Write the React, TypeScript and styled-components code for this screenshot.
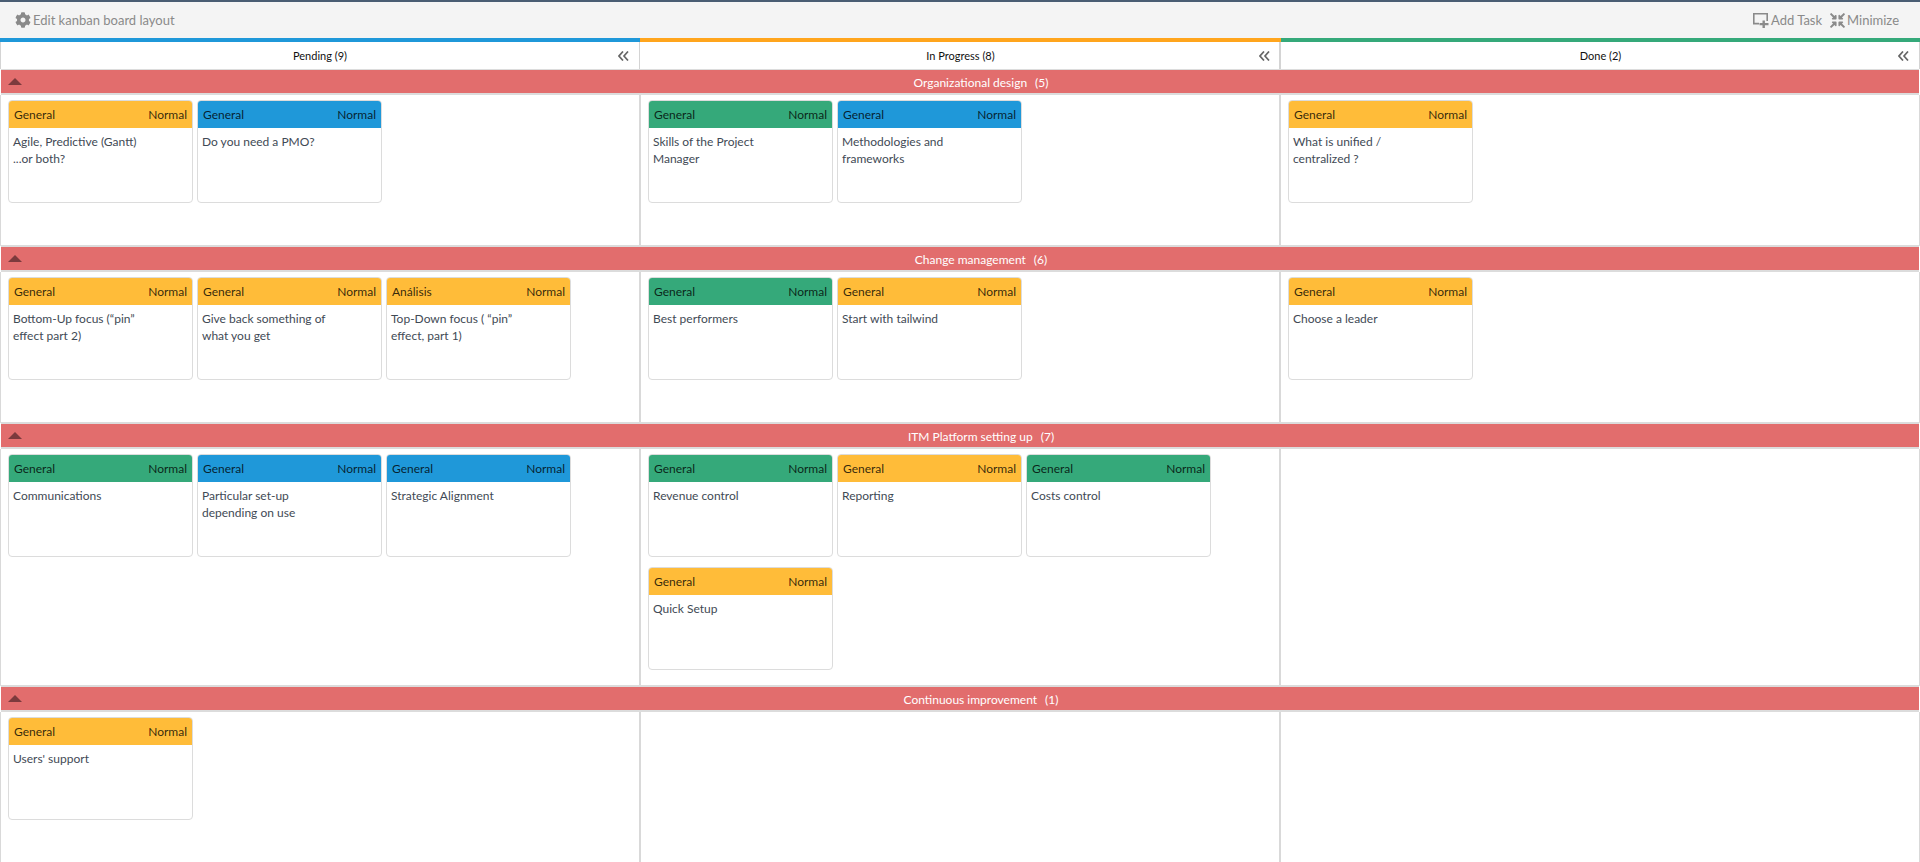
import React from 'react';
import styled, { createGlobalStyle } from 'styled-components';
import { FaCog, FaCompressArrowsAlt } from 'react-icons/fa';

const colors = { yellow: '#ffbc39', blue: '#1f98d9', green: '#35a97a' };
type Tone = keyof typeof colors;

type Task = { tone: Tone; type?: string; title: string[] };
type Lane = { name: string; count: number; minHeight: number; columns: Task[][] };

const lanes: Lane[] = [
  {
    name: 'Organizational design',
    count: 5,
    minHeight: 150,
    columns: [
      [
        { tone: 'yellow', title: ['Agile, Predictive (Gantt)', '...or both?'] },
        { tone: 'blue', title: ['Do you need a PMO?'] },
      ],
      [
        { tone: 'green', title: ['Skills of the Project', 'Manager'] },
        { tone: 'blue', title: ['Methodologies and', 'frameworks'] },
      ],
      [{ tone: 'yellow', title: ['What is unified /', 'centralized ?'] }],
    ],
  },
  {
    name: 'Change management',
    count: 6,
    minHeight: 150,
    columns: [
      [
        { tone: 'yellow', title: ['Bottom-Up focus (“pin”', 'effect part 2)'] },
        { tone: 'yellow', title: ['Give back something of', 'what you get'] },
        { tone: 'yellow', type: 'Análisis', title: ['Top-Down focus ( “pin”', 'effect, part 1)'] },
      ],
      [
        { tone: 'green', title: ['Best performers'] },
        { tone: 'yellow', title: ['Start with tailwind'] },
      ],
      [{ tone: 'yellow', title: ['Choose a leader'] }],
    ],
  },
  {
    name: 'ITM Platform setting up',
    count: 7,
    minHeight: 236,
    columns: [
      [
        { tone: 'green', title: ['Communications'] },
        { tone: 'blue', title: ['Particular set-up', 'depending on use'] },
        { tone: 'blue', title: ['Strategic Alignment'] },
      ],
      [
        { tone: 'green', title: ['Revenue control'] },
        { tone: 'yellow', title: ['Reporting'] },
        { tone: 'green', title: ['Costs control'] },
        { tone: 'yellow', title: ['Quick Setup'] },
      ],
      [],
    ],
  },
  {
    name: 'Continuous improvement',
    count: 1,
    minHeight: 150,
    columns: [[{ tone: 'yellow', title: ["Users' support"] }], [], []],
  },
];

const boardColumns: { label: string; accent: string }[] = [
  { label: 'Pending (9)', accent: '#1f98d9' },
  { label: 'In Progress (8)', accent: '#ffa51d' },
  { label: 'Done (2)', accent: '#35a97a' },
];

const GlobalStyle = createGlobalStyle`
  html, body { margin: 0; padding: 0; background: #fff; }
  body { font-family: Lato, "Open Sans", sans-serif; font-size: 12px; overflow: hidden; }
`;

const Page = styled.div`
  height: 862px;
  overflow: hidden;
  border-top: 2px solid #4a5d73;
  box-sizing: border-box;
`;

const Toolbar = styled.div`
  height: 36px;
  background: #f4f4f4;
  display: flex;
  align-items: center;
  justify-content: space-between;
  padding: 0 21px 0 15px;
  color: #8a8a8a;
  font-size: 13px;
`;

const ToolGroup = styled.div`
  display: flex;
  align-items: center;
  gap: 8px;
`;

const ToolItem = styled.span`
  display: inline-flex;
  align-items: center;
  gap: 2px;
`;

const HeaderRow = styled.div`
  display: grid;
  grid-template-columns: 640px 641px 1fr;
  height: 31px;
`;

const HeaderCell = styled.div<{ $accent: string }>`
  position: relative;
  border-top: 4px solid ${p => p.$accent};
  box-shadow: inset -2px 0 0 #d4d4d4;
  display: flex;
  align-items: center;
  justify-content: center;
  color: #111;
  font-size: 11px;
  &:first-child { box-shadow: inset 1px 0 0 #d4d4d4, inset -1px 0 0 #d4d4d4; }
  &:last-child { box-shadow: inset -1px 0 0 #d4d4d4; }
`;

const CollapseIcon = styled.svg`
  position: absolute;
  right: 11px;
  top: 9px;
`;

const LaneBar = styled.div`
  position: relative;
  height: 22px;
  background: #e26d6d;
  border-top: 1px solid #dcdcdc;
  border-bottom: 2px solid #dcdcdc;
  margin: 0 1px;
  padding: 1px 0 0 42px;
  display: flex;
  align-items: center;
  justify-content: center;
  color: #fff;
  font-size: 12px;
`;

const LaneCount = styled.span`
  margin-left: 8px;
`;

const Caret = styled.i`
  position: absolute;
  left: 7px;
  top: 8px;
  width: 0;
  height: 0;
  border-left: 7px solid transparent;
  border-right: 7px solid transparent;
  border-bottom: 7px solid #7c3a3d;
`;

const LaneBody = styled.div<{ $minHeight: number }>`
  display: grid;
  grid-template-columns: 641px 640px 1fr;
  min-height: ${p => p.$minHeight}px;
  border-bottom: 1px solid #dcdcdc;
`;

const Column = styled.div`
  border-right: 2px solid #d9d9d9;
  padding: 5px 0 0 7px;
  display: flex;
  flex-wrap: wrap;
  align-content: flex-start;
  gap: 10px 4px;
  &:first-child { border-left: 1px solid #d9d9d9; }
  &:last-child { border-right-width: 1px; }
`;

const Card = styled.div`
  width: 185px;
  height: 103px;
  box-sizing: border-box;
  border: 1px solid #dcdcdc;
  border-radius: 4px;
  overflow: hidden;
  background: #fff;
`;

const CardHead = styled.div<{ $tone: Tone }>`
  height: 27px;
  background: ${p => colors[p.$tone]};
  display: flex;
  align-items: center;
  justify-content: space-between;
  padding: 0 5px;
  color: rgba(0, 0, 0, 0.8);
  font-size: 12px;
`;

const CardTitle = styled.div`
  padding: 5px 4px;
  color: #3f4a55;
  font-size: 12px;
  line-height: 17px;
`;

const AddTaskIcon = () => (
  <svg width="16" height="15" viewBox="0 0 16 15" fill="#8a8a8a">
    <path d="M0 0h15v8h-1.6V1.6H1.6v8.2H6v1.6H0z" />
    <path d="M9.5 7.5h2.4v2.6h3.6v2.2h-3.6V15H9.5v-2.7H6.5v-2.2h3z" />
  </svg>
);

const DoubleChevron = () => (
  <CollapseIcon width="11" height="10" viewBox="0 0 11 10" fill="none" stroke="#666" strokeWidth="1.7">
    <path d="M5 .5L1 5l4 4.5M10 .5L6 5l4 4.5" />
  </CollapseIcon>
);

export default function App() {
  return (
    <Page>
      <GlobalStyle />
      <Toolbar>
        <ToolGroup>
          <ToolItem>
            <FaCog size={16} />
            Edit kanban board layout
          </ToolItem>
        </ToolGroup>
        <ToolGroup>
          <ToolItem>
            <AddTaskIcon />
            Add Task
          </ToolItem>
          <ToolItem>
            <FaCompressArrowsAlt size={15} />
            Minimize
          </ToolItem>
        </ToolGroup>
      </Toolbar>
      <HeaderRow>
        {boardColumns.map(col => (
          <HeaderCell key={col.label} $accent={col.accent}>
            {col.label}
            <DoubleChevron />
          </HeaderCell>
        ))}
      </HeaderRow>
      {lanes.map(lane => (
        <React.Fragment key={lane.name}>
          <LaneBar>
            <Caret />
            {lane.name}
            <LaneCount>({lane.count})</LaneCount>
          </LaneBar>
          <LaneBody $minHeight={lane.minHeight}>
            {lane.columns.map((tasks, i) => (
              <Column key={i}>
                {tasks.map((task, j) => (
                  <Card key={j}>
                    <CardHead $tone={task.tone}>
                      <span>{task.type ?? 'General'}</span>
                      <span>Normal</span>
                    </CardHead>
                    <CardTitle>
                      {task.title.map((line, k) => (
                        <div key={k}>{line}</div>
                      ))}
                    </CardTitle>
                  </Card>
                ))}
              </Column>
            ))}
          </LaneBody>
        </React.Fragment>
      ))}
    </Page>
  );
}
